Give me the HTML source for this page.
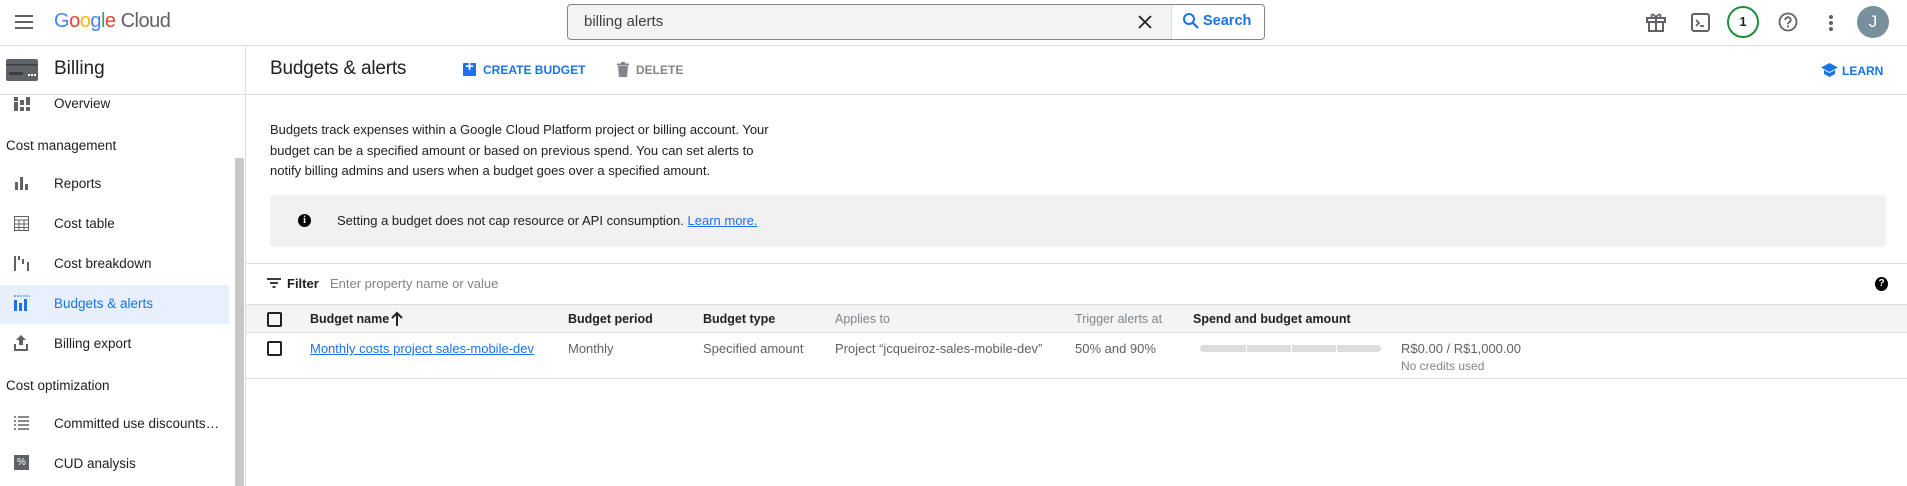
<!DOCTYPE html>
<html><head><meta charset="utf-8"><style>
*{box-sizing:border-box;margin:0;padding:0}
body{width:1907px;height:486px;overflow:hidden;background:#fff;font-family:"Liberation Sans",Arial,sans-serif;color:#202124;position:relative}
.a{position:absolute;white-space:nowrap}
.hl{position:absolute;height:1px;background:#dadce0}
.side{font-size:13.5px;color:#202124}
.th{font-size:12.5px;font-weight:bold;color:#202124}
.td{font-size:13px;color:#5f6368}
.ico{position:absolute}
</style></head><body>
<!-- top bar -->
<div class="a" style="left:15px;top:15px;width:18px;height:14px">
<div style="height:2px;background:#5f6368;margin-bottom:4px"></div><div style="height:2px;background:#5f6368;margin-bottom:4px"></div><div style="height:2px;background:#5f6368"></div></div>
<div class="a" style="left:54px;top:10px;font-size:20px;letter-spacing:-0.5px"><span style="color:#4285f4">G</span><span style="color:#ea4335">o</span><span style="color:#fbbc04">o</span><span style="color:#4285f4">g</span><span style="color:#34a853">l</span><span style="color:#ea4335">e</span> <span style="color:#5f6368">Cloud</span></div>
<div class="a" style="left:567px;top:4px;width:698px;height:36px;border:1px solid #80868b;border-radius:4px;background:#f1f3f4"></div>
<div class="a" style="left:1171px;top:5px;width:93px;height:34px;background:#fff;border-left:1px solid #dadce0;border-radius:0 4px 4px 0"></div>
<div class="a" style="left:584px;top:13px;font-size:15px;color:#3c4043">billing alerts</div>
<svg class="ico" style="left:1138px;top:15px" width="14" height="14" viewBox="0 0 14 14"><path d="M1 1L13 13M13 1L1 13" stroke="#202124" stroke-width="1.8"/></svg>
<svg class="ico" style="left:1182px;top:12px" width="18" height="18" viewBox="0 0 18 18"><circle cx="7" cy="7" r="5" fill="none" stroke="#1a73e8" stroke-width="2"/><path d="M11 11L16 16" stroke="#1a73e8" stroke-width="2.2"/></svg>
<div class="a" style="left:1203px;top:13px;font-size:14.5px;font-weight:bold;color:#1a73e8">Search</div>
<svg class="ico" style="left:1645px;top:11px" width="22" height="22" viewBox="0 0 22 22"><rect x="2" y="7" width="18" height="4" fill="none" stroke="#5f6368" stroke-width="2"/><rect x="4" y="11" width="14" height="9" fill="none" stroke="#5f6368" stroke-width="2"/><path d="M11 7v13" stroke="#5f6368" stroke-width="2"/><path d="M11 7C9 2 5 3 7 6M11 7C13 2 17 3 15 6" fill="none" stroke="#5f6368" stroke-width="1.8"/></svg>
<svg class="ico" style="left:1691px;top:13px" width="19" height="19" viewBox="0 0 19 19"><rect x="1" y="1" width="17" height="17" rx="2" fill="none" stroke="#5f6368" stroke-width="2"/><path d="M5 7l3 3-3 3M9 13h4" stroke="#5f6368" stroke-width="1.8" fill="none"/></svg>
<div class="a" style="left:1727px;top:6px;width:32px;height:32px;border:2px solid #1e8e3e;border-radius:50%;text-align:center;line-height:28px;font-size:13px;font-weight:bold;color:#202124">1</div>
<svg class="ico" style="left:1778px;top:12px" width="20" height="20" viewBox="0 0 20 20"><circle cx="10" cy="10" r="8.5" fill="none" stroke="#5f6368" stroke-width="1.8"/><path d="M7.3 8a2.7 2.7 0 1 1 3.7 2.4c-.8.4-1 .9-1 1.8" fill="none" stroke="#5f6368" stroke-width="1.8"/><circle cx="10" cy="14.5" r="1.1" fill="#5f6368"/></svg>
<div class="a" style="left:1829px;top:15px;width:4px"><div style="width:4px;height:4px;border-radius:50%;background:#5f6368;margin-bottom:2px"></div><div style="width:4px;height:4px;border-radius:50%;background:#5f6368;margin-bottom:2px"></div><div style="width:4px;height:4px;border-radius:50%;background:#5f6368"></div></div>
<div class="a" style="left:1857px;top:6px;width:32px;height:32px;border-radius:50%;background:#78909c;color:#fff;text-align:center;line-height:32px;font-size:17px">J</div>
<div class="hl" style="left:0;top:45px;width:1907px"></div>

<!-- sidebar -->
<svg class="ico" style="left:6px;top:59px" width="32" height="22" viewBox="0 0 32 22"><rect x="0" y="0" width="32" height="22" rx="2" fill="#5f6368"/><rect x="0" y="5" width="32" height="1.5" fill="#3c4043"/><rect x="3" y="13" width="14" height="3" fill="#3c4043"/><rect x="22" y="15" width="2" height="2" fill="#fff"/><rect x="25" y="15" width="2" height="2" fill="#fff"/><rect x="28" y="15" width="2" height="2" fill="#fff"/></svg>
<div class="a" style="left:54px;top:58px;font-size:19px;color:#202124">Billing</div>
<div class="hl" style="left:0;top:94px;width:1907px"></div>
<div class="a" style="left:245px;top:46px;width:1px;height:440px;background:#dadce0"></div>
<div class="a" style="left:235px;top:158px;width:9px;height:328px;background:#c8c8c8"></div>
<div class="a" style="left:0;top:285px;width:229px;height:39px;background:#e8f0fe"></div>

<svg class="ico" style="left:14px;top:97px" width="16" height="14" viewBox="0 0 16 14"><rect x="0" y="0" width="4" height="4" fill="#5f6368"/><rect x="0" y="5" width="4" height="9" fill="#5f6368"/><rect x="6" y="3" width="4" height="5" fill="#5f6368"/><rect x="6" y="10" width="4" height="4" fill="#5f6368"/><rect x="12" y="0" width="4" height="8" fill="#5f6368"/><rect x="12" y="10" width="4" height="4" fill="#5f6368"/></svg>
<div class="a side" style="left:54px;top:96px">Overview</div>
<div class="a side" style="left:6px;top:138px">Cost management</div>
<svg class="ico" style="left:15px;top:176px" width="14" height="14" viewBox="0 0 14 14"><rect x="0" y="6" width="3" height="8" fill="#5f6368"/><rect x="5" y="1" width="3" height="13" fill="#5f6368"/><rect x="10" y="8" width="3" height="6" fill="#5f6368"/></svg>
<div class="a side" style="left:54px;top:176px">Reports</div>
<svg class="ico" style="left:14px;top:216px" width="15" height="15" viewBox="0 0 15 15"><rect x="0.5" y="0.5" width="14" height="14" fill="none" stroke="#5f6368"/><path d="M0 4h15M0 8h15M0 11.5h15M5 4v11M10 4v11" stroke="#5f6368"/></svg>
<div class="a side" style="left:54px;top:216px">Cost table</div>
<svg class="ico" style="left:14px;top:256px" width="16" height="15" viewBox="0 0 16 15"><rect x="0" y="0" width="2" height="15" fill="#5f6368"/><rect x="4" y="0" width="2" height="4" fill="#5f6368"/><rect x="8" y="3" width="2" height="5" fill="#5f6368"/><rect x="13" y="6" width="2" height="9" fill="#5f6368"/></svg>
<div class="a side" style="left:54px;top:256px">Cost breakdown</div>
<svg class="ico" style="left:14px;top:295px" width="16" height="16" viewBox="0 0 16 16"><path d="M0 1h16" stroke="#1a73e8" stroke-dasharray="2 1"/><rect x="0" y="5" width="3" height="11" fill="#1a73e8"/><rect x="5" y="8" width="3" height="8" fill="#1a73e8"/><rect x="10" y="4" width="3" height="12" fill="#1a73e8"/></svg>
<div class="a side" style="left:54px;top:296px;color:#1a73e8">Budgets &amp; alerts</div>
<svg class="ico" style="left:14px;top:335px" width="14" height="16" viewBox="0 0 14 16"><path d="M7 0L2 5h3v5h4V5h3z" fill="#5f6368"/><path d="M1 9v6h12V9" fill="none" stroke="#5f6368" stroke-width="2"/></svg>
<div class="a side" style="left:54px;top:336px">Billing export</div>
<div class="a side" style="left:6px;top:378px">Cost optimization</div>
<svg class="ico" style="left:14px;top:416px" width="15" height="14" viewBox="0 0 15 14"><path d="M0 1h2M4 1h11M0 5h2M4 5h11M0 9h2M4 9h11M0 13h2M4 13h11" stroke="#5f6368" stroke-width="1.6"/></svg>
<div class="a side" style="left:54px;top:416px">Committed use discounts…</div>
<div class="a" style="left:14px;top:455px;width:15px;height:15px;background:#5f6368;color:#fff;font-size:10px;line-height:15px;text-align:center">%</div>
<div class="a side" style="left:54px;top:456px">CUD analysis</div>

<!-- main header -->
<div class="a" style="left:270px;top:58px;font-size:19px;color:#202124;letter-spacing:-0.2px">Budgets &amp; alerts</div>
<div class="a" style="left:463px;top:63px;width:13px;height:13px;background:#1a73e8;border-radius:1px"></div>
<div class="a" style="left:463px;top:58px;width:13px;color:#fff;font-size:15px;font-weight:bold;text-align:center">+</div>
<div class="a" style="left:483px;top:63px;font-size:12px;font-weight:bold;color:#1a73e8">CREATE BUDGET</div>
<svg class="ico" style="left:617px;top:62px" width="12" height="15" viewBox="0 0 12 15"><rect x="0" y="1.5" width="12" height="2" fill="#80868b"/><rect x="4" y="0" width="4" height="2" fill="#80868b"/><path d="M1 4h10l-1 11H2z" fill="#80868b"/></svg>
<div class="a" style="left:636px;top:63px;font-size:12px;font-weight:bold;color:#80868b">DELETE</div>
<svg class="ico" style="left:1821px;top:63px" width="17" height="15" viewBox="0 0 17 15"><path d="M8.5 0L17 4.5 8.5 9 0 4.5z" fill="#1a73e8"/><path d="M3 7v4l5.5 3 5.5-3V7l-5.5 3z" fill="#1a73e8"/></svg>
<div class="a" style="left:1842px;top:64px;font-size:12px;font-weight:bold;color:#1a73e8">LEARN</div>

<div class="a" style="left:270px;top:120px;font-size:13px;line-height:20.5px;color:#202124">Budgets track expenses within a Google Cloud Platform project or billing account. Your<br>budget can be a specified amount or based on previous spend. You can set alerts to<br>notify billing admins and users when a budget goes over a specified amount.</div>
<div class="a" style="left:270px;top:195px;width:1616px;height:52px;background:#f1f1f1;border-radius:3px"></div>
<div class="a" style="left:298px;top:214px;width:13px;height:13px;border-radius:50%;background:#000;color:#fff;font-size:10px;font-weight:bold;text-align:center;line-height:13px;font-family:'Liberation Serif',serif">i</div>
<div class="a" style="left:337px;top:213px;font-size:13px;color:#202124">Setting a budget does not cap resource or API consumption. <span style="color:#1a73e8;text-decoration:underline">Learn more.</span></div>

<div class="hl" style="left:246px;top:263px;width:1661px"></div>
<svg class="ico" style="left:267px;top:278px" width="14" height="10" viewBox="0 0 14 10"><path d="M0 1h14M3 5h8M5.5 9h3" stroke="#202124" stroke-width="1.8"/></svg>
<div class="a" style="left:287px;top:276px;font-size:13px;font-weight:bold">Filter</div>
<div class="a" style="left:330px;top:276px;font-size:13px;color:#80868b">Enter property name or value</div>
<div class="a" style="left:1875px;top:277px;width:13px;height:14px;border-radius:50%;background:#000;color:#fff;font-size:10px;font-weight:bold;text-align:center;line-height:14px">?</div>

<div class="a" style="left:246px;top:304px;width:1661px;height:29px;background:#f4f4f4;border-top:1px solid #dadce0;border-bottom:1px solid #dadce0"></div>
<div class="a" style="left:267px;top:312px;width:15px;height:15px;border:2px solid #202124;border-radius:2px"></div>
<div class="a th" style="left:310px;top:312px">Budget name</div>
<svg class="ico" style="left:391px;top:311px" width="12" height="15" viewBox="0 0 12 15"><path d="M6 15V2M1 7l5-5 5 5" fill="none" stroke="#202124" stroke-width="2"/></svg>
<div class="a th" style="left:568px;top:312px">Budget period</div>
<div class="a th" style="left:703px;top:312px">Budget type</div>
<div class="a th" style="left:835px;top:312px;color:#80868b;font-weight:normal">Applies to</div>
<div class="a th" style="left:1075px;top:312px;color:#80868b;font-weight:normal">Trigger alerts at</div>
<div class="a th" style="left:1193px;top:312px">Spend and budget amount</div>

<div class="a" style="left:267px;top:341px;width:15px;height:15px;border:2px solid #202124;border-radius:2px"></div>
<div class="a td" style="left:310px;top:341px;color:#1a73e8;text-decoration:underline">Monthly costs project sales-mobile-dev</div>
<div class="a td" style="left:568px;top:341px">Monthly</div>
<div class="a td" style="left:703px;top:341px">Specified amount</div>
<div class="a td" style="left:835px;top:341px">Project “jcqueiroz-sales-mobile-dev”</div>
<div class="a td" style="left:1075px;top:341px">50% and 90%</div>
<div class="a" style="left:1200px;top:345px;width:181px;height:7px;border-radius:4px;background:#dcdcdc"></div>
<div class="a" style="left:1246px;top:345px;width:1px;height:7px;background:#fff"></div>
<div class="a" style="left:1291px;top:345px;width:1px;height:7px;background:#fff"></div>
<div class="a" style="left:1336px;top:345px;width:1px;height:7px;background:#fff"></div>
<div class="a td" style="left:1401px;top:341px">R$0.00 / R$1,000.00</div>
<div class="a" style="left:1401px;top:359px;font-size:12px;color:#80868b">No credits used</div>
<div class="hl" style="left:246px;top:378px;width:1661px"></div>
</body></html>
